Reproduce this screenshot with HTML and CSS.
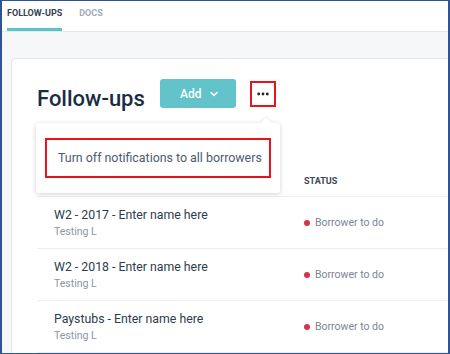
FILE: index.html
```html
<!DOCTYPE html>
<html lang="en">
<head>
  <meta charset="UTF-8" />
  <title>Follow-ups</title>
  <link rel="stylesheet" href="styles.css">
</head>
<body>
  <div class="frame">

    <!-- Tabs -->
    <nav class="tabs">
      <a class="tab active">FOLLOW-UPS</a>
      <a class="tab">DOCS</a>
    </nav>

    <div class="main">
      <div class="card">

        <!-- Header -->
        <div class="card-head">
          <h1>Follow-ups</h1>
          <button class="btn-add">Add
            <svg width="10" height="10" viewBox="0 0 10 10"><path d="M2 3.5 L5 6.5 L8 3.5" fill="none" stroke="#fff" stroke-width="1.6" stroke-linecap="round" stroke-linejoin="round"/></svg>
          </button>
          <button class="btn-more">
            <svg width="12" height="4" viewBox="0 0 12 4"><circle cx="1.7" cy="2" r="1.4" fill="#222"/><circle cx="6" cy="2" r="1.4" fill="#222"/><circle cx="10.3" cy="2" r="1.4" fill="#222"/></svg>
          </button>
        </div>

        <!-- Dropdown -->
        <div class="popover">
          <div class="popover-item">Turn off notifications to all borrowers</div>
        </div>

        <!-- Table -->
        <div class="table">
          <div class="row head">
            <div class="cell name"></div>
            <div class="cell">STATUS</div>
          </div>
          <div class="row">
            <div class="cell name">
              <div class="title">W2 - 2017 - Enter name here</div>
              <div class="sub">Testing L</div>
            </div>
            <div class="cell status"><span class="dot"></span>Borrower to do</div>
          </div>
          <div class="row">
            <div class="cell name">
              <div class="title">W2 - 2018 - Enter name here</div>
              <div class="sub">Testing L</div>
            </div>
            <div class="cell status"><span class="dot"></span>Borrower to do</div>
          </div>
          <div class="row">
            <div class="cell name">
              <div class="title">Paystubs - Enter name here</div>
              <div class="sub">Testing L</div>
            </div>
            <div class="cell status"><span class="dot"></span>Borrower to do</div>
          </div>
        </div>

      </div>
    </div>
  </div>
</body>
</html>
```

FILE: styles.css
```css
* {
  box-sizing: border-box;
  margin: 0;
  padding: 0;
}

body {
  font-family: Roboto, "Liberation Sans", sans-serif;
  background: #fff;
}

.frame {
  height: 354px;
  border: 2px solid #2f5496;
  border-top-width: 1px;
  border-bottom-width: 1px;
  display: flex;
  flex-direction: column;
  overflow: hidden;
}

.tabs {
  height: 31px;
  flex-shrink: 0;
  background: #fff;
  border-bottom: 1px solid #e4e7eb;
  padding-left: 5px;
  display: flex;
  gap: 17px;
}

.tab {
  font-size: 9px;
  font-weight: 700;
  color: #a3abb6;
  line-height: 24px;
  border-bottom: 3px solid transparent;
  height: 30px;
}

.tab.active {
  color: #354153;
  border-bottom-color: #5cc1c8;
}

.main {
  flex: 1;
  background: #f5f7f9;
  padding: 26px 0 0 9px;
}

.card {
  position: relative;
  background: #fff;
  border: 1px solid #e4e7ea;
  border-radius: 4px;
  margin-right: -20px;
  padding: 20px 0 0 25px;
  height: 320px;
}

.card-head {
  display: flex;
  align-items: center;
  height: 29px;
}

.card-head h1 {
  font-size: 22px;
  font-weight: 500;
  color: #1b2d45;
  margin-top: 9px;
  margin-right: 15px;
}

.btn-add {
  width: 76px;
  height: 29px;
  background: #63c3ca;
  border: none;
  border-radius: 3px;
  color: #fff;
  font-family: inherit;
  font-size: 12px;
  font-weight: 500;
  display: flex;
  align-items: center;
  justify-content: center;
  gap: 7px;
  padding-left: 3px;
}

.btn-more {
  margin-left: 14px;
  width: 26px;
  height: 26px;
  background: #fff;
  border: 2px solid #e8141c;
  display: flex;
  align-items: center;
  justify-content: center;
}

.popover {
  position: absolute;
  left: 24px;
  top: 64px;
  width: 244px;
  height: 70px;
  background: #fff;
  border-radius: 3px;
  box-shadow: 0 1px 5px rgba(0, 0, 0, 0.18);
  padding: 15px 9px;
  z-index: 2;
}

.popover::before {
  content: "";
  position: absolute;
  top: -4px;
  right: 10px;
  width: 8px;
  height: 8px;
  background: #fff;
  transform: rotate(45deg);
  box-shadow: -1px -1px 2px rgba(0, 0, 0, 0.08);
}

.popover-item {
  position: relative;
  height: 40px;
  border: 2px solid #e8141c;
  padding-left: 11px;
  line-height: 36px;
  font-size: 12.4px;
  white-space: nowrap;
  color: #4b5b70;
  background: #fff;
}

.table {
  margin-top: 58px;
}

.row {
  display: grid;
  grid-template-columns: 267px 1fr;
  align-items: center;
  height: 52px;
  border-bottom: 1px solid #eceef1;
}

.row.head {
  height: 31px;
  font-size: 9px;
  font-weight: 700;
  color: #3a4758;
}

.cell.name {
  padding-left: 17px;
}

.title {
  font-size: 12.3px;
  line-height: 16px;
  color: #2d3b4e;
}

.sub {
  margin-top: 2px;
  font-size: 10.5px;
  line-height: 14px;
  color: #8b95a3;
}

.status {
  font-size: 10.5px;
  color: #7b8594;
  display: flex;
  align-items: center;
}

.dot {
  width: 6px;
  height: 6px;
  border-radius: 50%;
  background: #d9304b;
  margin-right: 5px;
}
```
